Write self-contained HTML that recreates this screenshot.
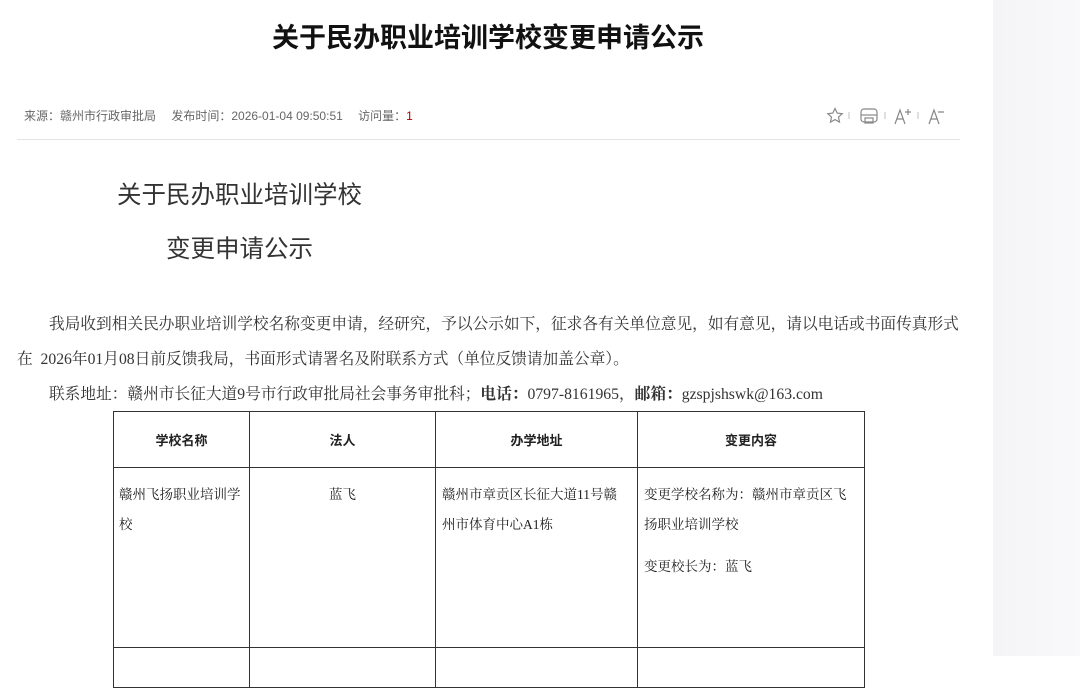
<!DOCTYPE html>
<html><head><meta charset="utf-8"><style>
*{margin:0;padding:0;box-sizing:border-box}
body{width:1080px;height:656px;overflow:hidden;background:#fff;position:relative;font-family:"Liberation Sans","Noto Sans CJK SC",sans-serif;color:#222}
.side{position:absolute;left:993px;top:0;width:87px;height:656px;background:linear-gradient(90deg,#f4f4f6,#f9f9fb)}
.abs{position:absolute;white-space:nowrap}
h1{position:absolute;left:0;width:976px;text-align:center;top:19px;font-size:27px;font-weight:bold;color:#111;line-height:38px}
.meta{left:24px;top:108px;font-size:12px;color:#666;line-height:16px}
.meta span{margin-right:12px}
.hr{position:absolute;left:17px;top:139px;width:943px;height:1px;background:#e4e4e4}
.h2{font-size:24.5px;color:#333;line-height:30px}
.p{font-family:"Liberation Serif","Noto Serif CJK SC",serif;font-size:15.7px;color:#333;line-height:20px}
table{position:absolute;left:113px;top:411px;border-collapse:collapse;font-family:"Liberation Serif","Noto Serif CJK SC",serif;font-size:13.5px;color:#222;table-layout:fixed}
td{border:1px solid #333;vertical-align:top;padding:0 5px;white-space:nowrap;overflow:hidden}
th{border:1px solid #333;font-weight:bold;font-size:13px;height:56px;font-family:"Liberation Sans","Noto Sans CJK SC",sans-serif}
td{line-height:30px;padding-top:12px}
</style></head><body>
<div class="side"></div>
<h1>关于民办职业培训学校变更申请公示</h1>
<div class="abs meta"><span>来源：赣州市行政审批局</span> <span>发布时间：2026-01-04 09:50:51</span> <span>访问量：<b style="font-weight:normal;color:#a00">1</b></span></div>
<svg class="abs" style="left:825px;top:106px" width="125" height="20" viewBox="0 0 125 20" fill="none" stroke="#888" stroke-width="1.2">
<path d="M10 2.5l2.2 4.6 5 .6-3.7 3.4 1 5-4.5-2.5-4.5 2.5 1-5L2.8 7.7l5-.6z"/>
<line x1="24" y1="6" x2="24" y2="13" stroke="#ccc"/>
<rect x="36" y="3" width="16" height="13" rx="3"/><line x1="36" y1="9" x2="52" y2="9"/><rect x="40" y="12" width="8" height="5"/>
<line x1="60" y1="6" x2="60" y2="13" stroke="#ccc"/>
<path d="M70 18l5-14 5 14M72 13h6M80 6h6M83 3v6"/>
<line x1="93" y1="6" x2="93" y2="13" stroke="#ccc"/>
<path d="M104 18l5-14 5 14M106 13h6M113 6h6"/>
</svg>
<div class="hr"></div>
<div class="abs h2" style="left:117px;top:181px">关于民办职业培训学校</div>
<div class="abs h2" style="left:166px;top:235px">变更申请公示</div>
<div class="abs p" style="left:49px;top:315px">我局收到相关民办职业培训学校名称变更申请，经研究，予以公示如下，征求各有关单位意见，如有意见，请以电话或书面传真形式</div>
<div class="abs p" style="left:17px;top:350px">在&nbsp; 2026年01月08日前反馈我局，书面形式请署名及附联系方式（单位反馈请加盖公章）。</div>
<div class="abs p" style="left:49px;top:385px">联系地址：赣州市长征大道9号市行政审批局社会事务审批科；<b>电话：</b>0797-8161965，<b>邮箱：</b>gzspjshswk@163.com</div>
<table>
<colgroup><col style="width:136px"><col style="width:186px"><col style="width:202px"><col style="width:227px"></colgroup>
<tr><th>学校名称</th><th>法人</th><th>办学地址</th><th>变更内容</th></tr>
<tr style="height:180px"><td>赣州飞扬职业培训学<br>校</td><td style="text-align:center">蓝飞</td><td style="padding-left:6px">赣州市章贡区长征大道11号赣<br>州市体育中心A1栋</td><td style="padding-left:6px">变更学校名称为：赣州市章贡区飞<br>扬职业培训学校<div style="margin-top:12px">变更校长为：蓝飞</div></td></tr>
<tr style="height:40px"><td></td><td></td><td></td><td></td></tr>
</table>
</body></html>
